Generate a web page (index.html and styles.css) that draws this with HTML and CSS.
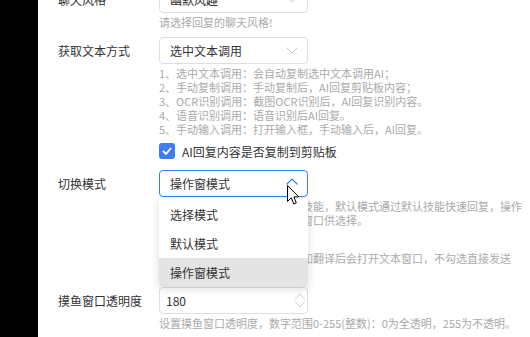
FILE: index.html
```html
<!DOCTYPE html>
<html lang="zh-CN">
<head>
    <meta charset="UTF-8">
    <meta name="viewport" content="width=device-width, initial-scale=1.0">
    <title>设置</title>
    <link rel="stylesheet" href="styles.css">
</head>
<body>
    <div class="page">
        <div class="sidebar"></div>

        <div class="settings">
            <div class="row first">
                <div class="label">聊天风格</div>
                <div class="field">
                    <div class="select">
                        <span>幽默风趣</span>
                        <svg class="arrow" width="12" height="7" viewBox="0 0 12 7"><polyline points="0.5,0.5 6,6 11.5,0.5" /></svg>
                    </div>
                    <p class="hint">请选择回复的聊天风格!</p>
                </div>
            </div>

            <div class="row">
                <div class="label">获取文本方式</div>
                <div class="field">
                    <div class="select">
                        <span>选中文本调用</span>
                        <svg class="arrow" width="12" height="7" viewBox="0 0 12 7"><polyline points="0.5,0.5 6,6 11.5,0.5" /></svg>
                    </div>
                    <p class="hint">
                        1、选中文本调用：会自动复制选中文本调用AI；<br>
                        2、手动复制调用：手动复制后，AI回复剪贴板内容；<br>
                        3、OCR识别调用：截图OCR识别后，AI回复识别内容。<br>
                        4、语音识别调用：语音识别后AI回复。<br>
                        5、手动输入调用：打开输入框，手动输入后，AI回复。
                    </p>
                </div>
            </div>

            <div class="row check-row">
                <div class="label"></div>
                <label class="check">
                    <span class="box"><svg width="10" height="8" viewBox="0 0 10 8"><polyline points="1,4 4,7 9,1" /></svg></span>
                    AI回复内容是否复制到剪贴板
                </label>
            </div>

            <div class="row mode-row">
                <div class="label">切换模式</div>
                <div class="field">
                    <div class="select-wrap">
                        <div class="select focused">
                            <span>操作窗模式</span>
                            <svg class="arrow up" width="12" height="7" viewBox="0 0 12 7"><polyline points="0.5,6.5 6,1 11.5,6.5" /></svg>
                        </div>
                        <ul class="dropdown">
                            <li>选择模式</li>
                            <li>默认模式</li>
                            <li class="active">操作窗模式</li>
                        </ul>
                        <svg class="cursor" width="13" height="21" viewBox="0 0 13 21">
                            <path d="M0.5,0.5 L0.5,16.5 L4.3,12.8 L6.8,19 L9.3,18 L6.9,11.9 L11.8,11.9 Z" />
                        </svg>
                    </div>
                    <p class="hint">
                        选择模式通过手动选择所需的技能，默认模式通过默认技能快速回复，操作<br>
                        窗模式将会弹出快捷技能操作窗口供选择。
                    </p>
                </div>
            </div>

            <div class="row check-row hidden-row">
                <div class="label"></div>
                <div class="field">
                    <label class="check">
                        <span class="box"><svg width="10" height="8" viewBox="0 0 10 8"><polyline points="1,4 4,7 9,1" /></svg></span>
                        打开文本窗口
                    </label>
                    <p class="hint tight">
                        勾选后，截图识别或划词调用如翻译后会打开文本窗口，不勾选直接发送<br>
                        到输入框。
                    </p>
                </div>
            </div>

            <div class="row">
                <div class="label">摸鱼窗口透明度</div>
                <div class="field">
                    <div class="select number">
                        <span>180</span>
                        <svg class="spin" width="12" height="15" viewBox="0 0 12 15"><path d="M1,6.5 L6,1 L11,6.5 M1,8.5 L6,14 L11,8.5" /></svg>
                    </div>
                    <p class="hint">设置摸鱼窗口透明度，数字范围0-255(整数)：0为全透明，255为不透明。</p>
                </div>
            </div>
        </div>
    </div>
</body>
</html>
```

FILE: styles.css
```css
body {
    margin: 0;
    padding: 0;
    background-color: #fff;
    font-family: "Noto Sans CJK SC", "Noto Sans", sans-serif;
    color: #333;
    overflow: hidden;
}

.page {
    display: flex;
    height: 337px;
    overflow: hidden;
}

.sidebar {
    width: 38px;
    flex-shrink: 0;
    background-color: #000;
}

.settings {
    flex: 1;
    min-width: 0;
    padding: 0 0 0 20px;
}

.row {
    display: grid;
    grid-template-columns: 101px 1fr;
    margin-top: 8px;
}

.row.first {
    margin-top: -14px;
}

.label {
    font-size: 12px;
    line-height: 27px;
    color: #333;
    white-space: nowrap;
}

.field {
    min-width: 0;
}

.select {
    box-sizing: border-box;
    width: 149px;
    height: 27px;
    border: 1px solid #dcdfe6;
    border-radius: 4px;
    background: #fff;
    display: flex;
    align-items: center;
    justify-content: space-between;
    padding: 0 9px 0 10px;
    font-size: 12px;
    color: #333;
}

.select .arrow polyline {
    fill: none;
    stroke: #c8c8c8;
    stroke-width: 1;
}

.select.focused {
    border-color: #3b7cf5;
}

.select .arrow.up {
    margin-top: -4px;
}

.select .arrow.up polyline {
    stroke: #3b7cf5;
    stroke-width: 1.2;
}

.select.number {
    padding: 0 1px 0 6px;
}

.select .spin path {
    fill: none;
    stroke: #d2d2d2;
    stroke-width: 1;
}

.hint {
    margin: 2px 0 0 0;
    font-size: 11px;
    line-height: 14px;
    color: #aaa;
    white-space: nowrap;
}

.hint.tight {
    margin-top: 1px;
}

.check-row {
    margin-top: 7px;
}

.check {
    display: flex;
    align-items: center;
    gap: 7px;
    height: 16px;
    font-size: 12px;
    color: #333;
    white-space: nowrap;
}

.box {
    box-sizing: border-box;
    width: 16px;
    height: 16px;
    border-radius: 3px;
    background-color: #3e7bf6;
    display: flex;
    align-items: center;
    justify-content: center;
}

.box polyline {
    fill: none;
    stroke: #fff;
    stroke-width: 1.8;
}

.mode-row {
    margin-top: 11px;
}

.select-wrap {
    position: relative;
    width: 149px;
}

.dropdown {
    position: absolute;
    top: 28px;
    left: 0;
    z-index: 10;
    box-sizing: border-box;
    width: 149px;
    margin: 0;
    padding: 2px 0 0 0;
    list-style: none;
    background: #fff;
    border-radius: 4px;
    box-shadow: 0 2px 10px rgba(0, 0, 0, 0.14);
    overflow: hidden;
}

.dropdown li {
    height: 29px;
    line-height: 29px;
    padding-left: 11px;
    font-size: 12px;
    color: #333;
}

.dropdown li.active {
    background-color: #e4e4e4;
}

.cursor {
    position: absolute;
    left: 128px;
    top: 15px;
    z-index: 20;
}

.cursor path {
    fill: #fff;
    stroke: #000;
    stroke-width: 1;
}
```
